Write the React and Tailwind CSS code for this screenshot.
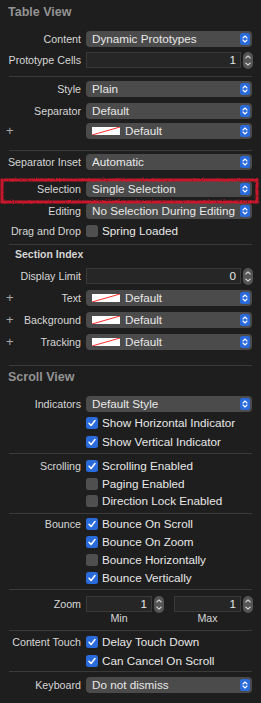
import React from 'react'

const font = { fontFamily: '"Liberation Sans", Arial, sans-serif' }

const PopupArrows = () => (
  <svg width="10" height="12" viewBox="0 0 10 12" className="shrink-0">
    <rect x="0" y="0" width="10" height="12" rx="2.5" fill="#2a6bdc" />
    <path d="M3 5 L5 3 L7 5 M3 7 L5 9 L7 7" fill="none" stroke="#fff" strokeWidth="1.1" strokeLinecap="round" strokeLinejoin="round" />
  </svg>
)

const Stepper = () => (
  <svg width="10" height="17" viewBox="0 0 10 17" className="shrink-0">
    <rect x="0" y="0" width="10" height="17" rx="5" fill="#555555" />
    <path d="M2.8 6 L5 3.8 L7.2 6 M2.8 11 L5 13.2 L7.2 11" fill="none" stroke="#d0d0d0" strokeWidth="1.1" strokeLinecap="round" strokeLinejoin="round" />
  </svg>
)

const Swatch = () => (
  <svg width="28" height="8" viewBox="0 0 28 8" className="shrink-0">
    <rect x="0" y="0" width="28" height="8" fill="#ffffff" />
    <path d="M0 8 L28 0" stroke="#ff2d2d" strokeWidth="1" />
  </svg>
)

const Check = ({ on }) =>
  on ? (
    <svg width="12" height="12" viewBox="0 0 12 12" className="shrink-0">
      <rect x="0" y="0" width="12" height="12" rx="2.5" fill="#2a6bdc" />
      <path d="M3 6.3 L5.1 8.5 L9 3.5" fill="none" stroke="#fff" strokeWidth="1.5" strokeLinecap="round" strokeLinejoin="round" />
    </svg>
  ) : (
    <span className="block h-[12px] w-[12px] shrink-0 rounded-[2.5px] bg-[#4f4f4f]" />
  )

const Label = ({ children, plus }) => (
  <div className="relative w-[81px] shrink-0 text-right text-[10.7px] text-[#d6d6d6]">
    {plus && (
      <span className="absolute left-[6px] top-1/2 -translate-y-1/2 text-[13px] font-light text-[#a8a8a8]">+</span>
    )}
    {children}
  </div>
)

const Popup = ({ children, swatch }) => (
  <div className="ml-[5px] flex h-[16px] w-[166px] items-center rounded-[4px] bg-[#4b4b4b] pl-[6px] pr-[2px] text-[11.7px] text-[#e8e8e8]">
    {swatch && (
      <span className="mr-[5px] flex">
        <Swatch />
      </span>
    )}
    <span className="flex-1 truncate leading-none">{children}</span>
    <PopupArrows />
  </div>
)

const NumberField = ({ value, width }) => (
  <div className="flex items-center">
    <div className={`flex h-[16px] items-center justify-end border border-[#3a3a3a] bg-[#262626] pr-[4px] text-[11.7px] text-[#e8e8e8] ${width}`}>
      {value}
    </div>
    <span className="ml-[2px] flex">
      <Stepper />
    </span>
  </div>
)

const CheckRow = ({ label, text, on, className }) => (
  <div className={`flex items-center ${className}`}>
    <Label>{label}</Label>
    <div className="ml-[5px] flex items-center gap-[4px] text-[11.7px] text-[#e8e8e8]">
      <Check on={on} />
      <span>{text}</span>
    </div>
  </div>
)

const Sep = ({ className }) => <div className={`mx-[9px] h-px bg-[#3a3a3a] ${className}`} />

// hand-drawn looking red box used as an annotation
const Highlight = () => (
  <svg width="261" height="30" viewBox="0 0 261 30" className="pointer-events-none absolute left-0 top-[176px]">
    <defs>
      <filter id="rough" x="-5%" y="-30%" width="110%" height="160%">
        <feTurbulence type="fractalNoise" baseFrequency="0.9" numOctaves="2" seed="3" />
        <feDisplacementMap in="SourceGraphic" scale="2.5" />
      </filter>
    </defs>
    <rect x="2" y="4" width="255" height="22" fill="none" stroke="#c8142c" strokeWidth="3" filter="url(#rough)" />
  </svg>
)

export default function App() {
  return (
    <div className="relative h-[703px] w-[261px] overflow-hidden bg-[#1e1e1e]" style={font}>
      {/* Table View */}
      <div className="mt-[2px] flex h-[20px] items-center pl-[8px] text-[12.5px] font-bold text-[#939393]">Table View</div>

      <div className="mt-[7px] flex h-[20px] items-center">
        <Label>Content</Label>
        <Popup>Dynamic Prototypes</Popup>
      </div>
      <div className="mt-[1px] flex h-[20px] items-center">
        <Label>Prototype Cells</Label>
        <div className="ml-[5px]">
          <NumberField value="1" width="w-[155px]" />
        </div>
      </div>

      <Sep className="mt-[6px]" />

      <div className="mt-[2px] flex h-[20px] items-center">
        <Label>Style</Label>
        <Popup>Plain</Popup>
      </div>
      <div className="mt-[2px] flex h-[20px] items-center">
        <Label>Separator</Label>
        <Popup>Default</Popup>
      </div>
      <div className="flex h-[20px] items-center">
        <Label plus />
        <Popup swatch>Default</Popup>
      </div>

      <Sep className="mt-[9px]" />

      <div className="mt-[1px] flex h-[20px] items-center">
        <Label>Separator Inset</Label>
        <Popup>Automatic</Popup>
      </div>
      <div className="mt-[7px] flex h-[20px] items-center">
        <Label>Selection</Label>
        <Popup>Single Selection</Popup>
      </div>
      <div className="mt-[2px] flex h-[20px] items-center">
        <Label>Editing</Label>
        <Popup>No Selection During Editing</Popup>
      </div>
      <CheckRow label="Drag and Drop" text="Spring Loaded" on={false} className="h-[20px]" />

      <Sep className="mt-[3px]" />

      {/* Section Index */}
      <div className="flex h-[20px] items-center pl-[15px] text-[10.5px] font-bold text-[#d6d6d6]">Section Index</div>
      <div className="mt-[1px] flex h-[20px] items-center">
        <Label>Display Limit</Label>
        <div className="ml-[5px]">
          <NumberField value="0" width="w-[155px]" />
        </div>
      </div>
      <div className="mt-[2px] flex h-[20px] items-center">
        <Label plus>Text</Label>
        <Popup swatch>Default</Popup>
      </div>
      <div className="mt-[2px] flex h-[20px] items-center">
        <Label plus>Background</Label>
        <Popup swatch>Default</Popup>
      </div>
      <div className="mt-[2px] flex h-[20px] items-center">
        <Label plus>Tracking</Label>
        <Popup swatch>Default</Popup>
      </div>

      <Sep className="mt-[13px]" />

      {/* Scroll View */}
      <div className="mt-[1px] flex h-[20px] items-center pl-[8px] text-[12.5px] font-bold text-[#939393]">Scroll View</div>
      <div className="mt-[7px] flex h-[20px] items-center">
        <Label>Indicators</Label>
        <Popup>Default Style</Popup>
      </div>
      <CheckRow label="" text="Show Horizontal Indicator" on className="h-[18px]" />
      <CheckRow label="" text="Show Vertical Indicator" on className="mt-[1px] h-[18px]" />

      <Sep className="mt-[2px]" />

      <CheckRow label="Scrolling" text="Scrolling Enabled" on className="mt-[3px] h-[18px]" />
      <CheckRow label="" text="Paging Enabled" on={false} className="h-[17px]" />
      <CheckRow label="" text="Direction Lock Enabled" on={false} className="h-[18px]" />

      <Sep className="mt-[3px]" />

      <CheckRow label="Bounce" text="Bounce On Scroll" on className="mt-[1px] h-[18px]" />
      <CheckRow label="" text="Bounce On Zoom" on className="h-[18px]" />
      <CheckRow label="" text="Bounce Horizontally" on={false} className="h-[18px]" />
      <CheckRow label="" text="Bounce Vertically" on className="h-[18px]" />

      <Sep className="mt-[2px]" />

      <div className="mt-[6px] flex h-[16px] items-center">
        <Label>Zoom</Label>
        <div className="ml-[5px] flex items-center">
          <NumberField value="1" width="w-[66px]" />
          <div className="ml-[10px]">
            <NumberField value="1" width="w-[67px]" />
          </div>
        </div>
      </div>
      <div className="flex h-[12px] items-center text-[10.7px] text-[#d6d6d6]">
        <div className="ml-[86px] w-[66px] text-center">Min</div>
        <div className="ml-[22px] w-[67px] text-center">Max</div>
      </div>

      <Sep className="mt-[6px]" />

      <CheckRow label="Content Touch" text="Delay Touch Down" on className="mt-[2px] h-[18px]" />
      <CheckRow label="" text="Can Cancel On Scroll" on className="mt-[1px] h-[18px]" />

      <Sep className="mt-[1px]" />

      <div className="mt-[3px] flex h-[20px] items-center">
        <Label>Keyboard</Label>
        <Popup>Do not dismiss</Popup>
      </div>

      <Highlight />
    </div>
  )
}
